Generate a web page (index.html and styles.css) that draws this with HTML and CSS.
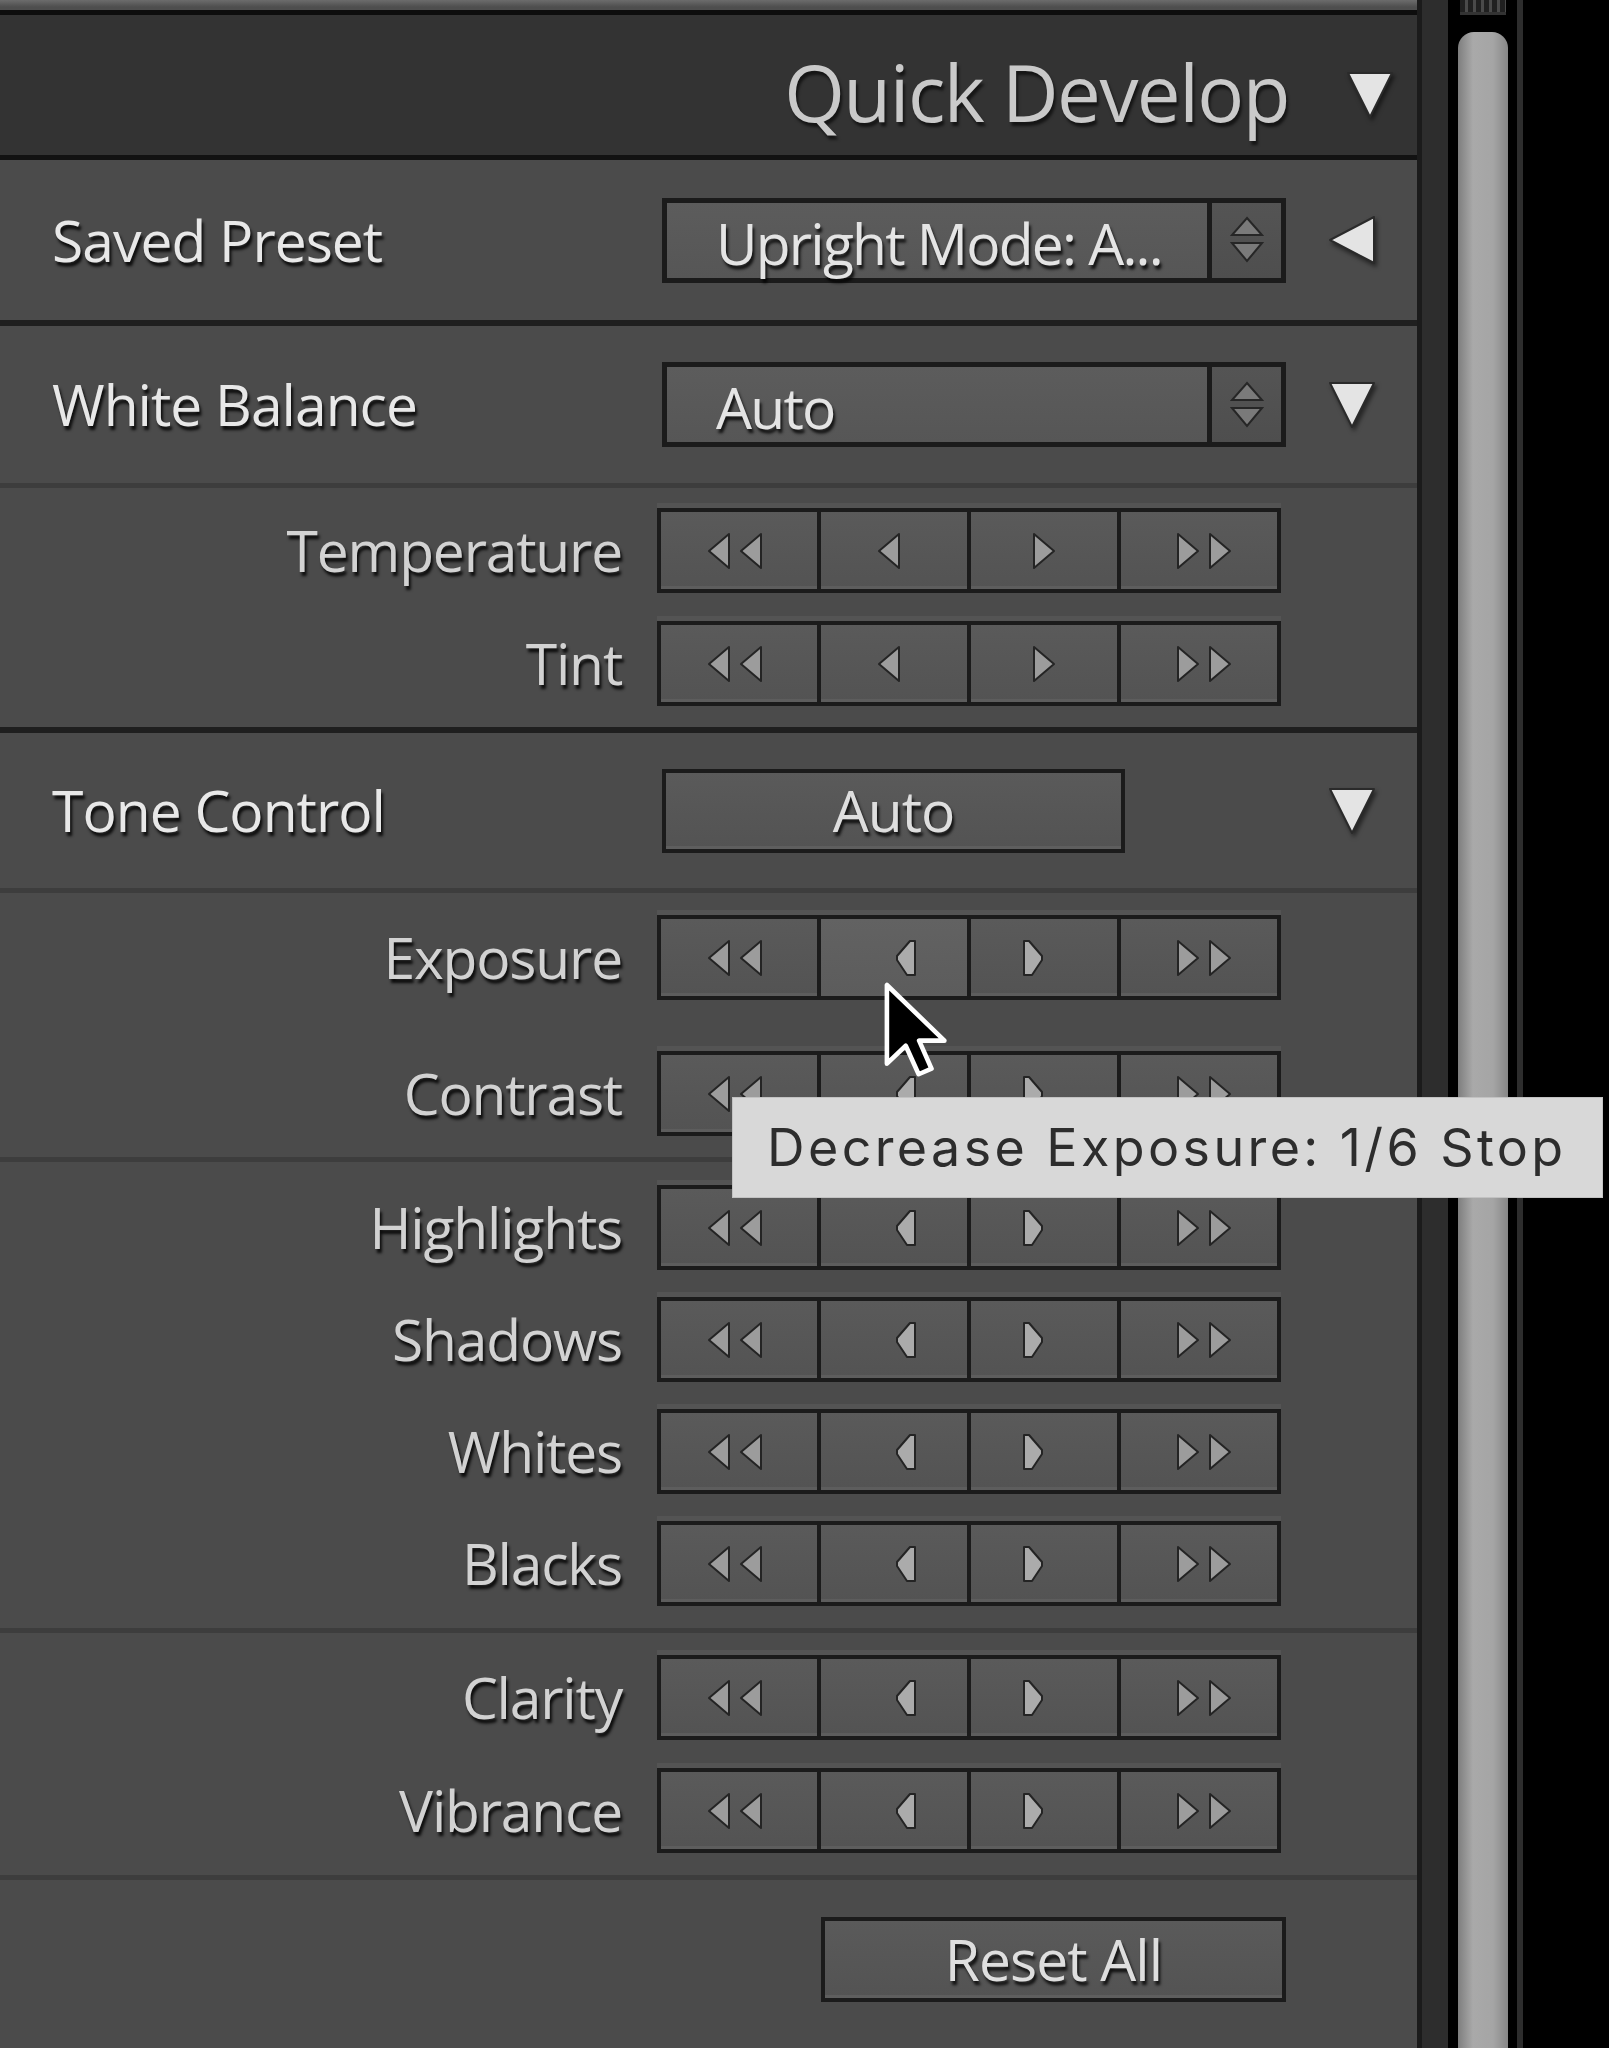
FILE: index.html
```html
<!DOCTYPE html>
<html lang="en">

<head>
    <meta charset="UTF-8">
    <meta name="viewport" content="width=device-width, initial-scale=1.0">
    <title>Quick Develop</title>
    <link rel="stylesheet" href="styles.css">
</head>

<body>
    <!-- arrow glyphs shared by the stepper buttons -->
    <svg class="defs" width="0" height="0">
        <symbol id="arrow-left" viewBox="0 0 24 38"><polygon points="22,2 2,19 22,36" /></symbol>
        <symbol id="arrow-right" viewBox="0 0 24 38"><polygon points="2,2 22,19 2,36" /></symbol>
        <symbol id="arrow-left2" viewBox="0 0 56 38"><polygon points="22,2 2,19 22,36" /><polygon points="54,2 34,19 54,36" /></symbol>
        <symbol id="arrow-right2" viewBox="0 0 56 38"><polygon points="2,2 22,19 2,36" /><polygon points="34,2 54,19 34,36" /></symbol>
        <symbol id="nudge-left" viewBox="0 0 24 38"><polygon points="21,2 16,2 3,17 3,21 13,36 21,36" /></symbol>
        <symbol id="nudge-right" viewBox="0 0 24 38"><polygon points="3,2 8,2 21,17 21,21 11,36 3,36" /></symbol>
        <symbol id="tri-down" viewBox="0 0 50 52"><polygon points="3,4 47,4 25,48" /></symbol>
        <symbol id="tri-left" viewBox="0 0 52 52"><polygon points="48,3 48,49 4,26" /></symbol>
        <symbol id="updown" viewBox="0 0 34 48"><polygon points="17,2 32,19 2,19" /><polygon points="2,27 32,27 17,45" /></symbol>
    </svg>

    <div class="app">
        <div class="panel">
            <div class="panel-top"></div>

            <div class="panel-header">
                <span class="panel-title">Quick Develop</span>
                <svg class="disclosure header-tri" width="50" height="52"><use href="#tri-down" /></svg>
            </div>

            <div class="section">
                <div class="head-row preset-row">
                    <span class="head-label">Saved Preset</span>
                    <div class="popup">
                        <span class="popup-value">Upright Mode: A...</span>
                        <span class="popup-arrows"><svg width="34" height="48"><use href="#updown" /></svg></span>
                    </div>
                    <svg class="disclosure" width="52" height="52"><use href="#tri-left" /></svg>
                </div>
            </div>

            <div class="section">
                <div class="head-row wb-row">
                    <span class="head-label">White Balance</span>
                    <div class="popup">
                        <span class="popup-value">Auto</span>
                        <span class="popup-arrows"><svg width="34" height="48"><use href="#updown" /></svg></span>
                    </div>
                    <svg class="disclosure" width="50" height="52"><use href="#tri-down" /></svg>
                </div>
                <div class="sub sub-wb">
                    <div class="adjust-row">
                        <span class="adjust-label">Temperature</span>
                        <div class="stepper">
                            <button class="seg end"><svg class="dbl-l" width="56" height="38"><use href="#arrow-left2" /></svg></button>
                            <button class="seg"><svg class="nudge-l" width="24" height="38"><use href="#arrow-left" /></svg></button>
                            <button class="seg"><svg width="24" height="38"><use href="#arrow-right" /></svg></button>
                            <button class="seg end"><svg class="dbl-r" width="56" height="38"><use href="#arrow-right2" /></svg></button>
                        </div>
                    </div>
                    <div class="adjust-row">
                        <span class="adjust-label">Tint</span>
                        <div class="stepper">
                            <button class="seg end"><svg class="dbl-l" width="56" height="38"><use href="#arrow-left2" /></svg></button>
                            <button class="seg"><svg class="nudge-l" width="24" height="38"><use href="#arrow-left" /></svg></button>
                            <button class="seg"><svg width="24" height="38"><use href="#arrow-right" /></svg></button>
                            <button class="seg end"><svg class="dbl-r" width="56" height="38"><use href="#arrow-right2" /></svg></button>
                        </div>
                    </div>
                </div>
            </div>

            <div class="section tone">
                <div class="head-row tone-row">
                    <span class="head-label">Tone Control</span>
                    <div class="auto-cell"><button class="auto-btn">Auto</button></div>
                    <svg class="disclosure" width="50" height="52"><use href="#tri-down" /></svg>
                </div>

                <div class="sub sub-tone1">
                    <div class="adjust-row">
                        <span class="adjust-label">Exposure</span>
                        <div class="stepper fine">
                            <button class="seg end"><svg class="dbl-l" width="56" height="38"><use href="#arrow-left2" /></svg></button>
                            <button class="seg hover"><svg class="in-l" width="24" height="38"><use href="#nudge-left" /></svg></button>
                            <button class="seg"><svg class="in-r" width="24" height="38"><use href="#nudge-right" /></svg></button>
                            <button class="seg end"><svg class="dbl-r" width="56" height="38"><use href="#arrow-right2" /></svg></button>
                        </div>
                    </div>
                    <div class="adjust-row">
                        <span class="adjust-label">Contrast</span>
                        <div class="stepper fine">
                            <button class="seg end"><svg class="dbl-l" width="56" height="38"><use href="#arrow-left2" /></svg></button>
                            <button class="seg"><svg class="in-l" width="24" height="38"><use href="#nudge-left" /></svg></button>
                            <button class="seg"><svg class="in-r" width="24" height="38"><use href="#nudge-right" /></svg></button>
                            <button class="seg end"><svg class="dbl-r" width="56" height="38"><use href="#arrow-right2" /></svg></button>
                        </div>
                    </div>
                </div>

                <div class="sub sub-tone2">
                    <div class="adjust-row">
                        <span class="adjust-label">Highlights</span>
                        <div class="stepper fine">
                            <button class="seg end"><svg class="dbl-l" width="56" height="38"><use href="#arrow-left2" /></svg></button>
                            <button class="seg"><svg class="in-l" width="24" height="38"><use href="#nudge-left" /></svg></button>
                            <button class="seg"><svg class="in-r" width="24" height="38"><use href="#nudge-right" /></svg></button>
                            <button class="seg end"><svg class="dbl-r" width="56" height="38"><use href="#arrow-right2" /></svg></button>
                        </div>
                    </div>
                    <div class="adjust-row">
                        <span class="adjust-label">Shadows</span>
                        <div class="stepper fine">
                            <button class="seg end"><svg class="dbl-l" width="56" height="38"><use href="#arrow-left2" /></svg></button>
                            <button class="seg"><svg class="in-l" width="24" height="38"><use href="#nudge-left" /></svg></button>
                            <button class="seg"><svg class="in-r" width="24" height="38"><use href="#nudge-right" /></svg></button>
                            <button class="seg end"><svg class="dbl-r" width="56" height="38"><use href="#arrow-right2" /></svg></button>
                        </div>
                    </div>
                    <div class="adjust-row">
                        <span class="adjust-label">Whites</span>
                        <div class="stepper fine">
                            <button class="seg end"><svg class="dbl-l" width="56" height="38"><use href="#arrow-left2" /></svg></button>
                            <button class="seg"><svg class="in-l" width="24" height="38"><use href="#nudge-left" /></svg></button>
                            <button class="seg"><svg class="in-r" width="24" height="38"><use href="#nudge-right" /></svg></button>
                            <button class="seg end"><svg class="dbl-r" width="56" height="38"><use href="#arrow-right2" /></svg></button>
                        </div>
                    </div>
                    <div class="adjust-row">
                        <span class="adjust-label">Blacks</span>
                        <div class="stepper fine">
                            <button class="seg end"><svg class="dbl-l" width="56" height="38"><use href="#arrow-left2" /></svg></button>
                            <button class="seg"><svg class="in-l" width="24" height="38"><use href="#nudge-left" /></svg></button>
                            <button class="seg"><svg class="in-r" width="24" height="38"><use href="#nudge-right" /></svg></button>
                            <button class="seg end"><svg class="dbl-r" width="56" height="38"><use href="#arrow-right2" /></svg></button>
                        </div>
                    </div>
                </div>

                <div class="sub sub-tone3">
                    <div class="adjust-row">
                        <span class="adjust-label">Clarity</span>
                        <div class="stepper fine">
                            <button class="seg end"><svg class="dbl-l" width="56" height="38"><use href="#arrow-left2" /></svg></button>
                            <button class="seg"><svg class="in-l" width="24" height="38"><use href="#nudge-left" /></svg></button>
                            <button class="seg"><svg class="in-r" width="24" height="38"><use href="#nudge-right" /></svg></button>
                            <button class="seg end"><svg class="dbl-r" width="56" height="38"><use href="#arrow-right2" /></svg></button>
                        </div>
                    </div>
                    <div class="adjust-row">
                        <span class="adjust-label">Vibrance</span>
                        <div class="stepper fine">
                            <button class="seg end"><svg class="dbl-l" width="56" height="38"><use href="#arrow-left2" /></svg></button>
                            <button class="seg"><svg class="in-l" width="24" height="38"><use href="#nudge-left" /></svg></button>
                            <button class="seg"><svg class="in-r" width="24" height="38"><use href="#nudge-right" /></svg></button>
                            <button class="seg end"><svg class="dbl-r" width="56" height="38"><use href="#arrow-right2" /></svg></button>
                        </div>
                    </div>
                </div>

                <div class="reset-block">
                    <button class="reset-btn">Reset All</button>
                </div>
            </div>
        </div>

        <div class="gutter"></div>
        <div class="scroll-track">
            <div class="scroll-grip"></div>
            <div class="scroll-thumb"></div>
        </div>
        <div class="edge"></div>

        <!-- pointer hovering the exposure button, with its tooltip -->
        <svg class="cursor" width="69" height="106" viewBox="0 0 15 23">
            <path d="M1.5 1.5 V18.6 L5.6 14.7 L8.4 20.9 L11.2 19.7 L8.5 13.6 H14 Z" fill="#000" stroke="#fff" stroke-width="1" stroke-linejoin="round" />
        </svg>
        <div class="tooltip">Decrease Exposure: 1/6 Stop</div>
    </div>
</body>

</html>
```

FILE: styles.css
```css
* {
    box-sizing: border-box;
}

body {
    margin: 0;
    background: #000;
    font-family: "Open Sans", "Noto Sans", sans-serif;
    overflow: hidden;
}

.defs {
    position: absolute;
}

.app {
    position: relative;
    display: flex;
    height: 2048px;
}

/* ---- panel ---- */

.panel {
    flex: none;
    width: 1422px;
    display: flex;
    flex-direction: column;
    background: #4b4b4b;
    border-right: 5px solid #1b1b1b;
}

.panel-top {
    flex: none;
    height: 15px;
    background: linear-gradient(#6c6c6c, #4e4e4e 70%);
    border-bottom: 5px solid #0d0d0d;
}

.panel-header {
    flex: none;
    height: 145px;
    display: flex;
    align-items: center;
    justify-content: flex-end;
    gap: 56px;
    padding: 14px 22px 0 0;
    background: #333;
    border-bottom: 5px solid #121212;
}

.panel-title {
    font-size: 78px;
    line-height: 1;
    letter-spacing: -1.5px;
    color: #c9c9c9;
    text-shadow: 2px 4px 3px rgba(0, 0, 0, 0.6);
}

.header-tri {
    margin-top: 6px;
}

.disclosure {
    justify-self: center;
    fill: #e4e4e4;
    stroke: #2a2a2a;
    stroke-width: 2;
    stroke-linejoin: round;
    filter: drop-shadow(2px 3px 2px rgba(0, 0, 0, 0.5));
}

.section {
    flex: none;
    border-bottom: 6px solid #1f1f1f;
}

.section.tone {
    flex: 1;
    display: flex;
    flex-direction: column;
    border-bottom: 0;
}

.head-row {
    display: grid;
    grid-template-columns: 662px 624px 1fr;
    align-items: center;
}

.preset-row {
    height: 160px;
}

.wb-row {
    height: 157px;
}

.tone-row {
    flex: none;
    height: 155px;
}

.head-label {
    padding-left: 52px;
    font-size: 57px;
    line-height: 1;
    letter-spacing: -1px;
    color: #e8e8e8;
    text-shadow: 2px 4px 3px rgba(0, 0, 0, 0.85);
}

/* popup menu with the up/down stepper */
.popup {
    display: flex;
    gap: 5px;
    height: 85px;
    border: 5px solid #1b1b1b;
    background: #1b1b1b;
}

.popup-value {
    flex: 1;
    display: flex;
    align-items: center;
    padding: 6px 0 0 49px;
    background: linear-gradient(#5c5c5c, #565656);
    font-size: 57px;
    line-height: 1;
    letter-spacing: -1.8px;
    color: #e4e4e4;
    text-shadow: 2px 4px 3px rgba(0, 0, 0, 0.8);
}

.popup-arrows {
    width: 69px;
    display: flex;
    align-items: center;
    justify-content: center;
    background: linear-gradient(#545454, #4e4e4e);
    fill: #7a7a7a;
    stroke: #262626;
    stroke-width: 2;
}

.auto-btn,
.reset-btn {
    height: 84px;
    border: 4px solid #1b1b1b;
    background: linear-gradient(#5a5a5a, #535353);
    box-shadow: inset 0 -3px 0 #5e5e5e;
    font-family: inherit;
    font-size: 57px;
    line-height: 1;
    letter-spacing: -1px;
    color: #dedede;
    text-shadow: 2px 4px 3px rgba(0, 0, 0, 0.8);
    padding: 0;
}

.auto-btn {
    width: 463px;
}

.reset-btn {
    width: 465px;
    height: 85px;
}

/* ---- adjustment rows ---- */

.sub {
    flex: none;
    display: flex;
    flex-direction: column;
    border-top: 5px solid #3d3d3d;
}

.sub-wb {
    gap: 28px;
    padding: 20px 0 21px;
}

.sub-tone1 {
    gap: 51px;
    padding: 22px 0 21px;
}

.sub-tone2 {
    gap: 27px;
    padding: 23px 0 22px;
}

.sub-tone3 {
    gap: 28px;
    padding: 22px 0 22px;
}

.adjust-row {
    display: grid;
    grid-template-columns: 622px 624px;
    column-gap: 35px;
    align-items: center;
}

.adjust-label {
    text-align: right;
    font-size: 57px;
    line-height: 1;
    letter-spacing: -1.2px;
    color: #d2d2d2;
    text-shadow: 2px 4px 3px rgba(0, 0, 0, 0.85);
}

.stepper {
    display: flex;
    gap: 4px;
    height: 85px;
    border: 4px solid #1b1b1b;
    background: #1b1b1b;
    box-shadow: 0 -5px 0 #545454;
}

.seg {
    flex: none;
    width: 146px;
    display: flex;
    align-items: center;
    justify-content: center;
    padding: 0;
    border: 0;
    background: linear-gradient(#5a5a5a, #535353);
    box-shadow: inset 0 -3px 0 #5d5d5d;
    fill: #9c9c9c;
    stroke: #242424;
    stroke-width: 2;
    stroke-linejoin: round;
}

.seg.end {
    width: 156px;
}

.seg.hover {
    background: linear-gradient(#626262, #5c5c5c);
}

.stepper.fine .in-l,
.stepper.fine .in-r {
    fill: #ababab;
}

.dbl-l {
    margin-right: 8px;
}

.dbl-r {
    margin-left: 10px;
}

.nudge-l {
    margin-right: 10px;
}

.in-l {
    margin-left: 24px;
}

.in-r {
    margin-right: 22px;
}

.reset-block {
    flex: 1;
    display: flex;
    justify-content: flex-end;
    align-items: flex-start;
    padding: 37px 131px 0 0;
    border-top: 5px solid #3d3d3d;
}

/* ---- scroll bar beside the panel ---- */

.gutter {
    flex: none;
    width: 26px;
    background: #2d2d2d;
}

.scroll-track {
    flex: none;
    width: 69px;
    display: flex;
    flex-direction: column;
    padding: 0 9px 0 10px;
    background: #000;
}

.scroll-grip {
    height: 15px;
    margin: 0 2px;
    background: repeating-linear-gradient(90deg, #202020 0 5px, #4a4a4a 5px 8px);
    border-bottom: 3px solid #333;
}

.scroll-thumb {
    flex: 1;
    margin-top: 17px;
    border-radius: 16px 16px 0 0;
    background: linear-gradient(90deg, #7e7e7e, #a9a9a9 30%, #a5a5a5 70%, #878787);
}

.edge {
    flex: none;
    width: 6px;
    background: #2d2d2d;
}

/* ---- hover overlay ---- */

.cursor {
    position: absolute;
    left: 880px;
    top: 978px;
}

.tooltip {
    position: absolute;
    left: 732px;
    top: 1097px;
    width: 871px;
    height: 101px;
    display: flex;
    align-items: center;
    padding-left: 34px;
    background: #d8d8d8;
    border: 1px solid #c2c2c2;
    font-family: Inter, "Liberation Sans", sans-serif;
    font-size: 52px;
    letter-spacing: 3.4px;
    color: #2d2d2d;
    white-space: nowrap;
}
```
